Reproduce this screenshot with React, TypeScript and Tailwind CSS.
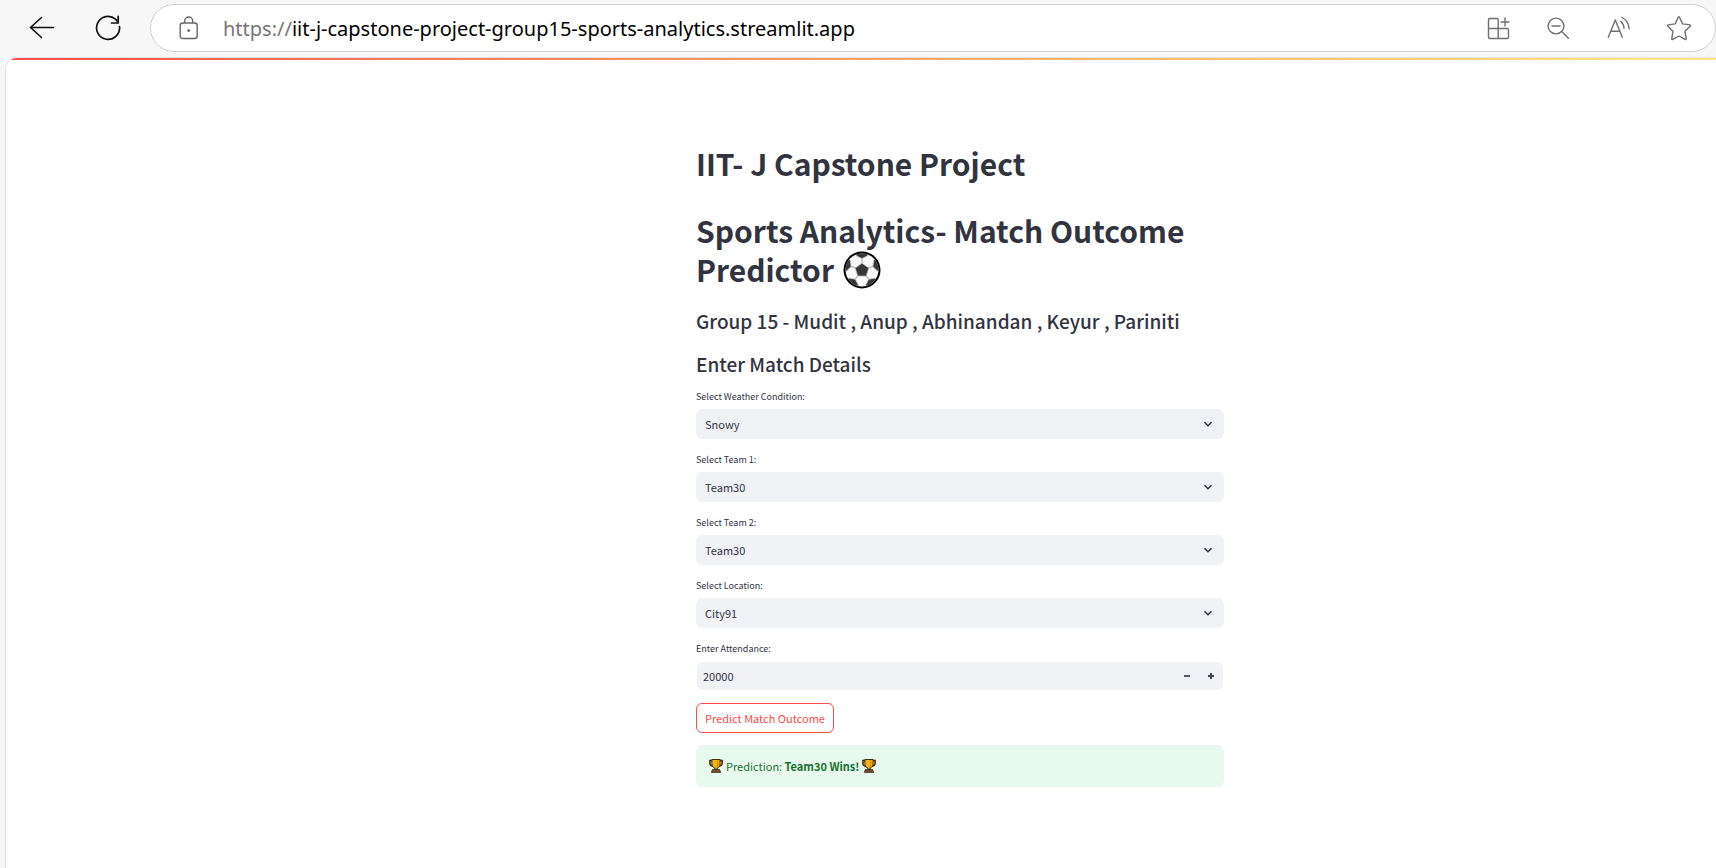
import { useState } from "react";

function BackIcon() {
  return (
    <svg width="26" height="24" viewBox="0 0 26 24" fill="none" stroke="#111" strokeWidth="1.6" strokeLinecap="round" strokeLinejoin="round">
      <path d="M24.5 11.500H1.500M12.500 1.500 1.500 11.500l11 10" />
    </svg>
  );
}

function ReloadIcon() {
  return (
    <svg width="26" height="26" viewBox="0 0 26 26" fill="none" stroke="#111" strokeWidth="1.7" strokeLinecap="round" strokeLinejoin="round">
      <path d="M24.5 11.500A11.500 11.500 0 1 1 20.500 4.100L23 7" />
      <path d="M23.200 1.400V8H16.500" />
    </svg>
  );
}

function LockIcon() {
  return (
    <svg width="20" height="24" viewBox="0 0 20 24" fill="none" stroke="#666" strokeWidth="1.4">
      <rect x="1.2" y="7" width="17" height="15.5" rx="2.5" />
      <path d="M5.7 7V5a4 4 0 0 1 8 0v2" />
      <circle cx="9.7" cy="14.6" r="1.4" fill="#666" stroke="none" />
    </svg>
  );
}

function AppsIcon() {
  return (
    <svg width="24" height="24" viewBox="0 0 24 24" fill="none" stroke="#6f6f6f" strokeWidth="1.4" strokeLinecap="round">
      <path d="M12.200 22.500V4a1.500 1.500 0 0 0-1.500-1.500H4a1.500 1.500 0 0 0-1.500 1.500V21A1.500 1.500 0 0 0 4 22.500H21a1.500 1.500 0 0 0 1.500-1.500v-7a1.500 1.500 0 0 0-1.500-1.500H2.500" />
      <path d="M19 2v8M15 6h8" />
    </svg>
  );
}

function ZoomOutIcon() {
  return (
    <svg width="24" height="24" viewBox="0 0 24 24" fill="none" stroke="#6f6f6f" strokeWidth="1.4" strokeLinecap="round">
      <circle cx="10" cy="10" r="7.900" />
      <path d="M6 10h8M15.800 15.600l6.600 6.600" />
    </svg>
  );
}

function ReadAloudIcon() {
  return (
    <svg width="24" height="24" viewBox="0 0 24 24" fill="none" stroke="#6f6f6f" strokeWidth="1.4" strokeLinecap="round" strokeLinejoin="round">
      <path d="M2.300 21.200 9.300 4l7 17.200M4.800 15.300h9" />
      <path d="M14.800 5.500a9 9 0 0 1 3.200 6.700M16.100 1.500a13.500 13.500 0 0 1 7 11.200" />
    </svg>
  );
}

function StarIcon() {
  return (
    <svg width="26" height="26" viewBox="0 0 26 26" fill="none" stroke="#6f6f6f" strokeWidth="1.4" strokeLinejoin="round">
      <path d="M12.200 2.200c.3-.6 1-.6 1.300 0l3.100 6.700 7.200 1c.7.1 1 .9.400 1.400l-5.300 5 1.400 7.300c.1.700-.600 1.200-1.200.8L13 21l-6.200 3.400c-.6.300-1.200-.2-1.100-.8l1.300-7.300-5.200-5c-.5-.5-.2-1.300.4-1.400l7-1z" />
    </svg>
  );
}

const ballAngles = [0, 72, 144, 216, 288];

function SoccerBall() {
  return (
    <svg role="img" aria-label="Soccer ball" className="ml-0.5 inline-block align-[-7px]" width="38" height="38" viewBox="0 0 38 38">
      <defs>
        <clipPath id="ball">
          <circle cx="19" cy="19" r="16.500" />
        </clipPath>
      </defs>
      <circle cx="19" cy="19" r="18.500" fill="#000" />
      <g clipPath="url(#ball)">
        <circle cx="19" cy="19" r="17" fill="#fafafa" />
        {ballAngles.map((angle) => (
          <g key={angle} transform={`rotate(${angle} 19 19)`}>
            <path d="M19 13V7" stroke="#bdbdbd" strokeWidth="1.400" />
            <path d="M11 0 13.500 4.800 19 7.600l5.500-2.800L27 0z" fill="#373737" stroke="#bdbdbd" strokeWidth=".8" />
          </g>
        ))}
        <path d="M19 12.200l6.800 4.900-2.600 8h-8.400l-2.600-8z" fill="#373737" stroke="#bdbdbd" strokeWidth=".8" />
      </g>
    </svg>
  );
}

function Trophy() {
  return (
    <svg role="img" aria-label="Trophy" className="shrink-0" width="14" height="14" viewBox="0 0 14 14">
      <path d="M3 1.700H1v2.600c0 1.600 1.200 2.700 3 2.900M11 1.700h2v2.600c0 1.600-1.200 2.700-3 2.900" fill="none" stroke="#2b1d08" strokeWidth="1.700" />
      <path d="M3 2.200H1.300v2c0 1.300.9 2.200 2.500 2.400M11 2.200h1.700v2c0 1.300-.9 2.200-2.500 2.400" fill="none" stroke="#d98c00" strokeWidth=".6" />
      <path d="M2.900.500h8.200v4.300c0 2.300-1.200 3.700-3 4.200v1.700H5.900V9c-1.800-.5-3-1.900-3-4.200z" fill="#f8b312" stroke="#2b1d08" strokeWidth=".9" />
      <path d="M8.800 1.200v4.300c0 1-.4 1.900-1 2.600" fill="none" stroke="#d98200" strokeWidth="1.100" />
      <path d="M3.500 10.400h7l1.200 3H2.300z" fill="#7a4a32" stroke="#2b1d08" strokeWidth=".7" />
    </svg>
  );
}

type SelectFieldProps = { id: string; label: string; options: string[] };

function SelectField({ id, label, options }: SelectFieldProps) {
  return (
    <div className="mb-3.5 flex flex-col">
      <label htmlFor={id} className="mb-[5px] self-start text-[9px] leading-[14px]">
        {label}
      </label>
      <div className="relative">
        <select
          id={id}
          className="block h-[30px] w-full appearance-none rounded-md bg-[#f0f2f6] px-[9px] text-[11px] outline-none focus:ring-1 focus:ring-[#ff4b4b]"
        >
          {options.map((option) => (
            <option key={option}>{option}</option>
          ))}
        </select>
        <svg className="pointer-events-none absolute top-[9px] right-2.5" width="12" height="12" viewBox="0 0 12 12" fill="none" stroke="#31333f" strokeWidth="1.500">
          <path d="M2.500 4.300 6 7.700l3.500-3.400" />
        </svg>
      </div>
    </div>
  );
}

const toolbarActions = [
  { label: "Apps", icon: <AppsIcon /> },
  { label: "Zoom out", icon: <ZoomOutIcon /> },
  { label: "Read aloud", icon: <ReadAloudIcon /> },
  { label: "Add to favourites", icon: <StarIcon /> },
];

export default function App() {
  const [attendance, setAttendance] = useState(20000);

  return (
    <div className="flex min-h-screen flex-col bg-[#f7f7f7]">
      <header className="flex h-[57px] items-start pt-1 pl-7">
        <div className="flex h-12 items-center gap-[38px]">
          <button aria-label="Back" className="flex w-7 justify-center">
            <BackIcon />
          </button>
          <button aria-label="Reload" className="flex w-7 justify-center">
            <ReloadIcon />
          </button>
        </div>
        <div className="ml-7 flex h-12 flex-1 items-center rounded-full border-[1.5px] border-[#cfcfcf] bg-white pr-[23px] pl-7">
          <LockIcon />
          <p className="ml-6 flex-1 pt-0.5 font-['Noto_Sans',sans-serif] text-[20px] leading-7 text-black">
            <span className="text-[#767676]">https://</span>iit-j-capstone-project-group15-sports-analytics.streamlit.app
          </p>
          <div className="flex items-center gap-9">
            {toolbarActions.map((action) => (
              <button key={action.label} aria-label={action.label} className="flex">
                {action.icon}
              </button>
            ))}
          </div>
        </div>
      </header>

      <div className="ml-[5px] flex flex-1 flex-col overflow-hidden rounded-tl-xl border-t border-l border-[#e3e3e3] bg-white">
        <div className="h-0.5 bg-linear-to-r from-[#ff4b4b] to-[#ffe978]" />
        <main className="pt-[84px] pb-16 pl-[198px] font-['Noto_Sans_CJK_SC','Noto_Sans_CJK_JP',sans-serif] text-[#31333f]">
          <div className="mx-auto w-full max-w-[528px]">
            <h1 className="text-[30px] leading-[39px] font-bold">IIT- J Capstone Project</h1>
            <h1 className="mt-7 text-[30px] leading-[39px] font-bold">
              Sports Analytics- Match Outcome Predictor <SoccerBall />
            </h1>
            <h3 className="mt-[19px] text-[19px] leading-[26px] font-medium">Group 15 - Mudit , Anup , Abhinandan , Keyur , Pariniti</h3>
            <h3 className="mt-[17px] mb-[13px] text-[19px] leading-[26px] font-medium">Enter Match Details</h3>

            <form onSubmit={(event) => event.preventDefault()}>
              <SelectField id="weather" label="Select Weather Condition:" options={["Snowy", "Sunny", "Rainy"]} />
              <SelectField id="team1" label="Select Team 1:" options={["Team30", "Team31"]} />
              <SelectField id="team2" label="Select Team 2:" options={["Team30", "Team31"]} />
              <SelectField id="location" label="Select Location:" options={["City91", "City92"]} />

              <div className="flex flex-col">
                <label htmlFor="attendance" className="mb-[5px] self-start text-[9px] leading-[14px]">
                  Enter Attendance:
                </label>
                <div className="m-px flex h-7 items-stretch overflow-hidden rounded-md bg-[#f0f2f6]">
                  <input
                    id="attendance"
                    type="text"
                    inputMode="numeric"
                    value={attendance}
                    onChange={(event) => setAttendance(Number(event.target.value) || 0)}
                    className="min-w-0 flex-1 bg-transparent px-1.5 text-[11px] outline-none"
                  />
                  <button type="button" aria-label="Decrease" onClick={() => setAttendance(attendance - 1)} className="flex w-6 items-center justify-center">
                    <svg width="8" height="8" viewBox="0 0 8 8" fill="#555762">
                      <rect x="1" y="3" width="6" height="2" />
                    </svg>
                  </button>
                  <button type="button" aria-label="Increase" onClick={() => setAttendance(attendance + 1)} className="flex w-6 items-center justify-center">
                    <svg width="8" height="8" viewBox="0 0 8 8" fill="#41434e">
                      <path d="M3 1h2v2h2v2H5v2H3V5H1V3h2z" />
                    </svg>
                  </button>
                </div>
              </div>

              <button type="submit" className="mt-3 block h-[30px] rounded-md border border-[#ff4b4b] px-2 text-[11px] text-[#ff4b4b]">
                Predict Match Outcome
              </button>
            </form>

            <div role="status" className="mt-3 flex h-[42px] items-center gap-[3px] rounded-md bg-[#e8f9ee] px-[13px] text-[11px] text-[#177233]">
              <Trophy />
              <p>
                Prediction: <strong className="font-bold">Team30 Wins!</strong>
              </p>
              <Trophy />
            </div>
          </div>
        </main>
      </div>
    </div>
  );
}
